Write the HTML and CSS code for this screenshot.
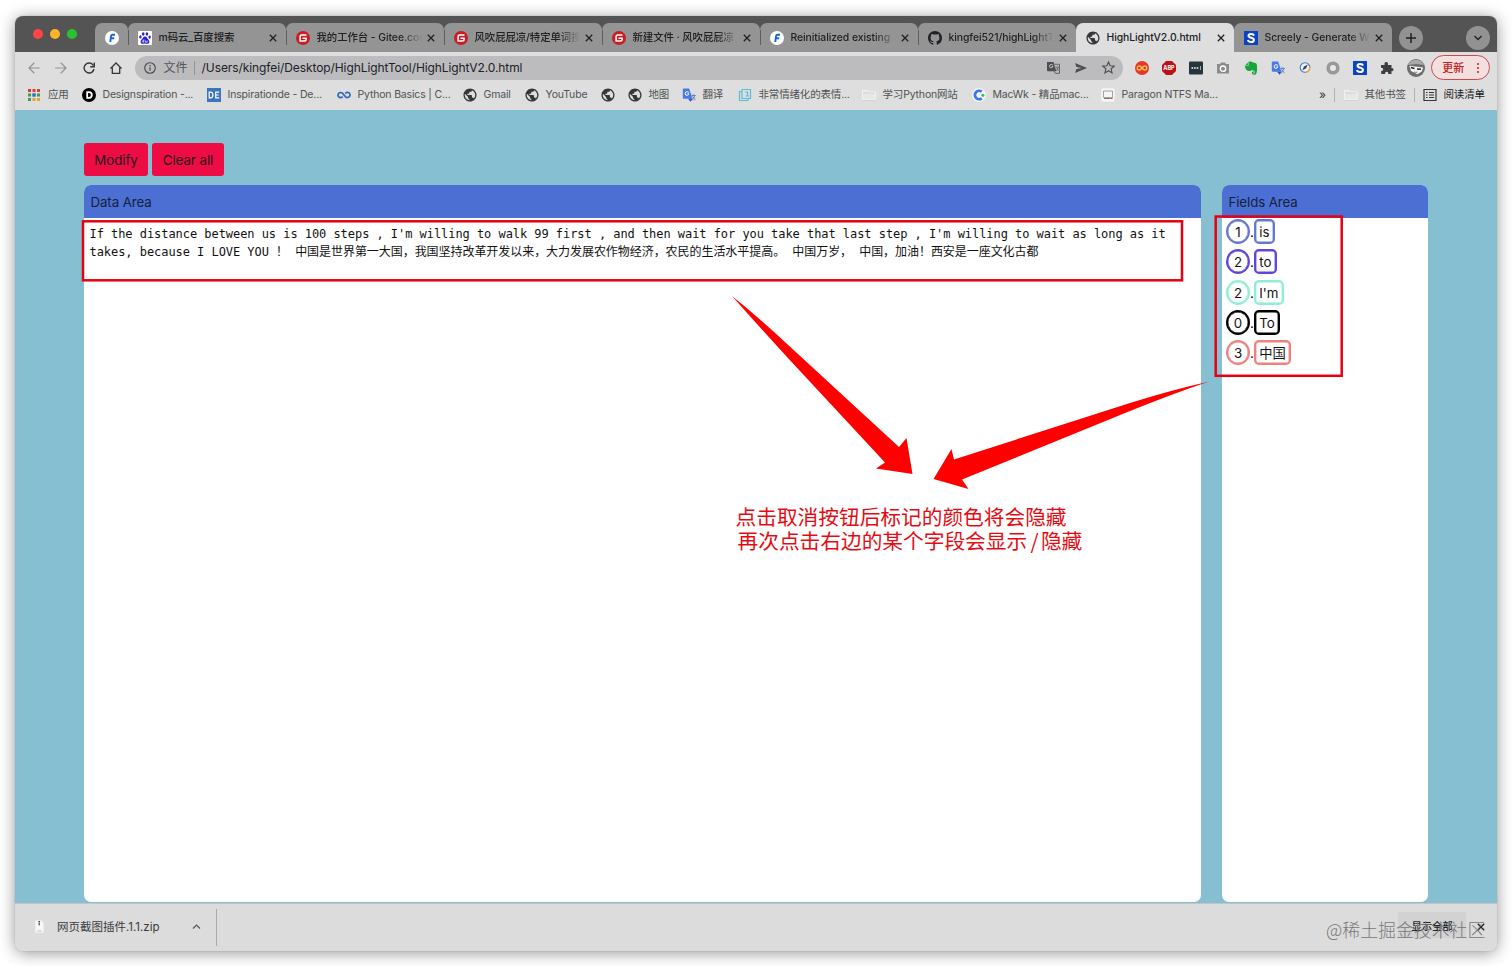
FILE: index.html
```html
<!DOCTYPE html>
<html lang="zh-CN">
<head>
<meta charset="utf-8">
<title>HighLightV2.0.html</title>
<link rel="stylesheet" href="styles.css">
</head>
<body>
<svg class="defs" width="0" height="0">
  <symbol id="f" viewBox="0 0 14 14"><circle cx="7" cy="7" r="7" fill="#fff"/><path d="M10 3.700H7.600Q6.200 3.700 6 5.300L5.300 11M5 7.300H9.200" fill="none" stroke="#1766dc" stroke-width="1.900"/></symbol>
  <symbol id="baidu" viewBox="0 0 14 14"><rect width="14" height="14" rx="1" fill="#fff"/><g fill="#2a22d8"><ellipse cx="5.2" cy="3" rx="1.3" ry="1.8"/><ellipse cx="8.9" cy="3" rx="1.3" ry="1.8"/><ellipse cx="2.4" cy="5.9" rx="1.2" ry="1.7"/><ellipse cx="11.6" cy="6.1" rx="1.2" ry="1.7"/><path d="M7 5.600c1.800 0 2 1.700 3.300 2.800 1.500 1.300 1.600 4.300-.9 4.300-1.200 0-1.500-.3-2.400-.3s-1.200.3-2.400.3c-2.500 0-2.400-3-.9-4.300C5 7.300 5.200 5.600 7 5.600z"/></g><path d="M5.800 8.500v2.700H4.700q-.7-.8 0-1.500h1M7.500 9.500v1.700h1.700V9.500" fill="none" stroke="#fff" stroke-width=".7"/></symbol>
  <symbol id="gitee" viewBox="0 0 14 14"><circle cx="7" cy="7" r="7" fill="#c71d23"/><path d="M10.500 4.100H5.900Q4.100 4.100 4.100 5.800v4.200h4.500q1.500 0 1.500-1.500V7.200H6.500" fill="none" stroke="#fff" stroke-width="1.500"/></symbol>
  <symbol id="github" viewBox="0 0 16 16"><path fill="#202124" d="M8 0C3.580 0 0 3.580 0 8c0 3.540 2.290 6.530 5.470 7.590.4.070.55-.17.55-.38 0-.19-.01-.82-.01-1.490-2.010.37-2.530-.49-2.690-.94-.09-.23-.48-.94-.82-1.130-.28-.15-.68-.52-.01-.53.63-.01 1.080.58 1.230.82.72 1.210 1.870.87 2.330.66.07-.52.28-.87.51-1.070-1.780-.2-3.640-.89-3.640-3.950 0-.87.31-1.590.82-2.150-.08-.2-.36-1.020.08-2.120 0 0 .67-.21 2.200.82.64-.18 1.320-.27 2-.27s1.360.09 2 .27c1.530-1.040 2.200-.82 2.200-.82.44 1.100.16 1.920.08 2.120.51.56.82 1.270.82 2.150 0 3.070-1.870 3.750-3.650 3.950.29.25.54.73.54 1.480 0 1.070-.01 1.930-.01 2.200 0 .21.15.46.55.38A8.010 8.010 0 0 0 16 8c0-4.420-3.580-8-8-8z"/></symbol>
  <symbol id="globe" viewBox="1.300 1.300 21.400 21.400"><path fill="#35363a" d="M12 2C6.480 2 2 6.480 2 12s4.480 10 10 10 10-4.480 10-10S17.520 2 12 2zm-1 17.930c-3.950-.49-7-3.850-7-7.930 0-.62.08-1.210.21-1.790L9 15v1c0 1.100.9 2 2 2v1.930zm6.900-2.540c-.26-.81-1-1.390-1.900-1.390h-1v-3c0-.55-.45-1-1-1H8v-2h2c.55 0 1-.45 1-1V7h2c1.100 0 2-.9 2-2v-.41c2.930 1.190 5 4.060 5 7.410 0 2.080-.8 3.970-2.100 5.390z"/></symbol>
  <symbol id="s" viewBox="0 0 14 14"><rect width="14" height="14" fill="#0b43c4"/><path d="M10 4.600Q9.500 2.900 7.100 2.900 4.500 2.900 4.500 4.800c0 2.700 5.400 1.300 5.400 4.100q0 2.100-2.700 2.100-2.700 0-3.300-2" fill="none" stroke="#fff" stroke-width="2"/></symbol>
  <symbol id="x" viewBox="0 0 8 8"><path d="M.8.800l6.400 6.400M7.200.800L.8 7.200" stroke="#202124" stroke-width="1.300"/></symbol>
  <symbol id="back" viewBox="0 0 12 12"><path d="M6.300.8L1 6l5.300 5.200M1 6h10.700" fill="none" stroke="#929296" stroke-width="1.200"/></symbol>
  <symbol id="trans" viewBox="0 0 14 14"><path d="M7.500 5.500H13v7.500H9z" fill="#c9cfdd"/><path d="M1.800.5h5.400l3.200 10.300H1.800q-1 0-1-1V1.500q0-1 1-1z" fill="#4679ea"/><path d="M6 10.800h4.400l-1.700 2.900z" fill="#2d4fae"/><path d="M6.800 4.300Q5 3 3.500 4.300q-1 1.700.4 2.900 2 .8 3-1.300H5.400" fill="none" stroke="#fff"/><path d="M9.600 7.500h4.200M11.700 6.500v1m-1.700 4q2.500-1.500 2.900-4m-2.400 1 2.900 3.300" fill="none" stroke="#5c74a8" stroke-width=".8"/></symbol>
  <symbol id="folder" viewBox="0 0 14 12"><path d="M.5 10.500v-9h4.700l1.200 1.400h7v7.600z" fill="#e7e7e7" stroke="#f2f2f2"/><path d="M.5 11.400h13M1 4h12" stroke="#c7c7c7" stroke-width=".6"/></symbol>
</svg>

<div class="window">
  <header class="tabstrip">
    <div class="lights"><i class="red"></i><i class="yellow"></i><i class="green"></i></div>
    <div class="tab pinned"><svg class="ico"><use href="#f"/></svg></div>
    <div class="tab"><svg class="ico"><use href="#baidu"/></svg><span class="title">m码云_百度搜索</span><svg class="close"><use href="#x"/></svg></div>
    <div class="tab"><svg class="ico"><use href="#gitee"/></svg><span class="title fade">我的工作台 - Gitee.com</span><svg class="close"><use href="#x"/></svg></div>
    <div class="tab"><svg class="ico"><use href="#gitee"/></svg><span class="title fade">风吹屁屁凉/特定单词搜</span><svg class="close"><use href="#x"/></svg></div>
    <div class="tab"><svg class="ico"><use href="#gitee"/></svg><span class="title fade">新建文件 · 风吹屁屁凉</span><svg class="close"><use href="#x"/></svg></div>
    <div class="tab"><svg class="ico"><use href="#f"/></svg><span class="title fade">Reinitialized existing</span><svg class="close"><use href="#x"/></svg></div>
    <div class="tab before-active"><svg class="ico"><use href="#github"/></svg><span class="title fade">kingfei521/highLightT</span><svg class="close"><use href="#x"/></svg></div>
    <div class="tab active"><svg class="ico"><use href="#globe"/></svg><span class="title">HighLightV2.0.html</span><svg class="close"><use href="#x"/></svg></div>
    <div class="tab last"><svg class="ico"><use href="#s"/></svg><span class="title fade">Screely - Generate W</span><svg class="close"><use href="#x"/></svg></div>
    <div class="round plus"><svg width="12" height="12"><path d="M6 1v10M1 6h10" stroke="#202124" stroke-width="1.500"/></svg></div>
    <div class="round search"><svg width="10" height="8"><path d="M1.500 2L5 5.500 8.500 2" fill="none" stroke="#202124" stroke-width="1.400"/></svg></div>
  </header>

  <nav class="toolbar">
    <svg class="nav"><use href="#back"/></svg>
    <svg class="nav forward"><use href="#back"/></svg>
    <svg class="nav" viewBox="0 0 12 12"><path d="M10.300 3.300A5 5 0 1 0 11 7M11.300.6v4.100H7.200" fill="none" stroke="#35363a" stroke-width="1.400"/></svg>
    <svg class="nav" viewBox="0 0 12 12"><path d="M.5 6.500L6 1l5.500 5.500M2.300 5.500v5.800h7.400V5.500" fill="none" stroke="#35363a" stroke-width="1.300"/></svg>
    <div class="omnibox">
      <svg width="12" height="12"><circle cx="6" cy="6" r="5.300" fill="none" stroke="#45464a" stroke-width="1.100"/><path d="M6 5.300v3.500M6 3v1.300" stroke="#45464a" stroke-width="1.200"/></svg>
      <span class="scheme">文件</span>
      <span class="url">/Users/kingfei/Desktop/HighLightTool/HighLightV2.0.html</span>
      <svg class="o1" width="13" height="13" viewBox="0 0 14 14"><path d="M0 1h7l3 10H1q-1 0-1-1z" fill="#4c4d50"/><path d="M8 3.500h5.500v9.800H9L7.500 11" fill="none" stroke="#5a5b5e"/><path d="M6.500 4.300Q4.600 3 3.100 4.300q-1 1.700.4 2.900 1.900.9 3-1.200H5" fill="none" stroke="#ccc"/><path d="M9.200 6.500h3.500m-2.800 4q2-1.300 2.300-4m-2 1.500 2.300 2.700" fill="none" stroke="#5a5b5e" stroke-width=".9"/></svg>
      <svg class="o2" width="12" height="10"><path d="M0 0l12 5L0 10l1.500-4L7 5 1.500 4z" fill="#4c4d50"/></svg>
      <svg class="o3" width="13" height="13" viewBox="0 0 14 14"><path d="M7 1l1.700 4.100 4.500.4-3.400 2.900 1 4.400L7 10.500l-3.800 2.300 1-4.400L.8 5.500l4.500-.4z" fill="none" stroke="#4c4d50" stroke-width="1.200"/></svg>
    </div>
    <div class="exts">
      <svg viewBox="0 0 14 14"><circle cx="7" cy="7" r="7" fill="#e6372d"/><path d="M7 7Q5.500 5 4.200 5a2 2 0 0 0 0 4Q5.500 9 7 7t2.800-2a2 2 0 0 1 0 4Q8.500 9 7 7z" fill="none" stroke="#ffc247" stroke-width="1.300"/></svg>
      <svg viewBox="0 0 14 14"><path d="M4.100 0h5.800L14 4.100v5.800L9.900 14H4.100L0 9.900V4.100z" fill="#bd1118"/><text x="7" y="9.200" class="abp">ABP</text></svg>
      <svg viewBox="0 0 14 14"><rect width="14" height="13" y=".5" rx="1" fill="#26343c"/><path d="M2.500 7h1.600m1 0h1.600m1 0h1.600" stroke="#fff" stroke-width="1.600"/><path d="M11.500 5v4" stroke="#9eacb1"/></svg>
      <svg viewBox="0 0 14 14"><path d="M1 3h3l1-1.500h4L10 3h3v9.500H1z" fill="#8b8b8b"/><circle cx="7" cy="7.700" r="2.700" fill="none" stroke="#fff" stroke-width="1.300"/></svg>
      <svg viewBox="0 0 14 14"><path d="M.8 4.800L4.700.8q2.800-.8 4.300.8l2.500.5q1.300.3 1.400 2 .6 5.400-.4 8.200-.6 1.600-2.500 1.500-2.300-.1-2.200-2 .1-1.700 2.200-1.600v1.300q-.9 0-.9.5t1 .5q.8-.2.600-1.800Q10.400 9.500 9 9.500L8 8.800Q7.500 10.500 4.500 9.900 1.500 9.500.8 4.800z" fill="#16a53a"/><path d="M1.200 4.600h3.200V1.300" stroke="#dcdcdc" stroke-width=".6" fill="none"/></svg>
      <svg><use href="#trans"/></svg>
      <svg viewBox="0 0 14 14"><circle cx="7" cy="6.500" r="4.800" fill="#eef0f4" stroke="#4b78c5" stroke-width="1.100"/><path d="M8 11.200a4.800 4.800 0 0 0 3.700-5.800" fill="none" stroke="#eda943" stroke-width="1.500"/><path d="M9.800 3.600L8 7.500 4.300 9.300 6 5.400z" fill="#26466c"/></svg>
      <svg viewBox="0 0 14 14"><circle cx="7" cy="7" r="4.800" fill="#e8e8e8" stroke="#999" stroke-width="3.600"/></svg>
      <svg viewBox="0 0 14 14"><use href="#s"/></svg>
      <svg viewBox="0 0 14 14"><path d="M1 4h3.600Q4 1 6.200 1T7.900 4h3.600v3.300q2-.5 2 1.300t-2 1.500V13H8.300q.2-2.300-1.600-2.300T5 13H1.200V9.900Q3.300 10 3.300 8.300T1 6.800z" fill="#3d3e41"/></svg>
    </div>
    <svg class="avatar" viewBox="0 0 18 18"><circle cx="9" cy="9" r="9" fill="#6d6d6d"/><path d="M1 6Q3 1 9 .800 15 1 17 6L9 5z" fill="#a9a9a9"/><path d="M2.500 6.800L16 8.500l-1 3.700-4.500 3L4 12z" fill="#f4f4f4"/><path d="M4 8.500l3.500.9M10 10l4 .3" stroke="#222" stroke-width="1.500"/><path d="M7 13q2 .8 3.500 0" fill="none" stroke="#666" stroke-width=".8"/></svg>
    <div class="update"><span>更新</span><i></i></div>
  </nav>

  <nav class="bookmarks">
    <div class="bm b-apps"><svg viewBox="0 0 12 12"><g stroke-width="3" stroke-dasharray="3 1.500"><path d="M0 1.500h12" stroke="#d8412f"/><path d="M0 6h12" stroke="#3d9a52"/><path d="M4.500 6h3" stroke="#2c6fd8"/><path d="M0 10.500h12" stroke="#e0a52c"/><path d="M0 10.500h3" stroke="#3d9a52"/></g></svg><span>应用</span></div>
    <div class="bm b-design"><svg viewBox="0 0 14 14"><circle cx="7" cy="7" r="7"/><path d="M5.200 4.200H7Q9.800 4.200 9.800 7T7 9.800H5.200z" fill="none" stroke="#fff" stroke-width="1.800"/></svg><span>Designspiration -...</span></div>
    <div class="bm b-insp"><svg viewBox="0 0 14 14"><rect width="14" height="14" fill="#3b75bd"/><path d="M2.200 4.200h1.400q2.300 0 2.300 2.800T3.600 9.800H2.200zM12.200 4.200H8.700v5.600h3.500M8.700 7h3" fill="none" stroke="#fff" stroke-width="1.200"/></svg><span>Inspirationde - De...</span></div>
    <div class="bm b-python"><svg viewBox="0 0 14 14"><path d="M5.700 8.600Q4.800 9.700 3.600 9.700a2.600 2.600 0 1 1 1.800-4.500l3.200 3.600a2.600 2.600 0 1 0-.3-3.400" fill="none" stroke="#3867b7" stroke-width="1.700"/></svg><span>Python Basics | C...</span></div>
    <div class="bm b-gmail"><svg><use href="#globe"/></svg><span>Gmail</span></div>
    <div class="bm b-yt"><svg><use href="#globe"/></svg><span>YouTube</span></div>
    <div class="bm b-blank"><svg><use href="#globe"/></svg></div>
    <div class="bm b-map"><svg><use href="#globe"/></svg><span>地图</span></div>
    <div class="bm b-trans"><svg><use href="#trans"/></svg><span>翻译</span></div>
    <div class="bm b-emo"><svg viewBox="0 0 14 14"><path d="M4 1.500h8.500v9H4zM4 3.500H1.500v9h8.500v-2M7 4h2.500v4M7.500 8h3.500" fill="none" stroke="#56bddd" stroke-width="1.200"/></svg><span>非常情绪化的表情...</span></div>
    <div class="bm b-learn"><svg><use href="#folder"/></svg><span>学习Python网站</span></div>
    <div class="bm b-mac"><svg viewBox="0 0 14 14"><circle cx="7" cy="7" r="7" fill="#f2f4f7"/><path d="M9.700 3.700A4.200 4.200 0 1 0 9.700 10.300" fill="none" stroke="#3979e8" stroke-width="2.800"/><circle cx="10.900" cy="7.300" r="1.500" fill="#33bd55"/></svg><span>MacWk - 精品mac...</span></div>
    <div class="bm b-para"><svg viewBox="0 0 14 14"><rect x=".3" y=".3" width="13.400" height="13.400" rx="2" fill="#f5f5f5"/><path d="M2.500 3h9v6.500h-9z" fill="none" stroke="#8e8e8e" stroke-width=".8"/><path d="M3 10.500h6" stroke="#777" stroke-width="1.200"/><path d="M9.500 10.500h2" stroke="#c33" stroke-width="1.200"/></svg><span>Paragon NTFS Ma...</span></div>
    <span class="more">»</span>
    <div class="bm b-other"><svg><use href="#folder"/></svg><span>其他书签</span></div>
    <div class="bm b-read"><svg viewBox="0 0 14 14"><path d="M1 1.500h12v11H1zM3 4.500h1.500m1.500 0h5M3 7h1.500M6 7h5M3 9.500h1.500m1.500 0h5" fill="none" stroke="#35363a" stroke-width="1.200"/></svg><span>阅读清单</span></div>
  </nav>

  <main class="page">
    <div class="buttons"><button class="btn modify">Modify</button><button class="btn clear">Clear all</button></div>
    <div class="panels">
      <section class="panel data">
        <h2>Data Area</h2>
        <p><span class="line">If the distance between us is 100 steps , I'm willing to walk 99 first , and then wait for you take that last step , I'm willing to wait as long as it</span><span class="line">takes, because I LOVE YOU ！ 中国是世界第一大国，我国坚持改革开发以来，大力发展农作物经济，农民的生活水平提高。 中国万岁， 中国，加油！西安是一座文化古都</span></p>
      </section>
      <section class="panel fields">
        <h2>Fields Area</h2>
        <ul>
          <li class="c1"><b>1</b><i>.</i><span>is</span></li>
          <li class="c2"><b>2</b><i>.</i><span>to</span></li>
          <li class="c3"><b>2</b><i>.</i><span>I'm</span></li>
          <li class="c4"><b>0</b><i>.</i><span>To</span></li>
          <li class="c5"><b>3</b><i>.</i><span>中国</span></li>
        </ul>
      </section>
    </div>
  </main>

  <footer class="downloads">
    <svg class="zip" viewBox="0 0 10 14"><path d="M.5.500h6.500l2.500 2.500v10.500h-9z" fill="#f7f7f7" stroke="#eee"/><path d="M4.700 1v5" stroke="#333" stroke-width="1.600" stroke-dasharray="1.200 .5"/><path d="M2.500 12h5" stroke="#bbb"/></svg>
    <span class="file">网页截图插件.1.1.zip</span>
    <svg class="chev" width="9" height="7"><path d="M1 5.500L4.500 2 8 5.500" fill="none" stroke="#55565a" stroke-width="1.200"/></svg>
    <div class="showall">显示全部</div>
    <svg class="dclose"><use href="#x"/></svg>
  </footer>
</div>

<svg class="marks" width="1512" height="966">
  <g fill="none" stroke="#e60012" stroke-width="2.500"><rect x="83" y="221.300" width="1099" height="59"/><rect x="1215.700" y="216.500" width="126" height="159.300"/></g>
  <path d="M732 296Q757 316 786 343L899 447 906.500 438 912.500 474 876 468.500 885 462.500 787 357Q754 321 732 296z" fill="#f00"/>
  <path d="M1209.500 381.500Q1175 389 1130 403L954 459.500 951.500 449 933.500 479 968.500 489 962 479.500 1130 411Q1180 391 1209.500 381.500z" fill="#f00"/>
</svg>
<div class="note">点击取消按钮后标记的颜色将会隐藏<br><span class="second">再次点击右边的某个字段会显示<span class="slash"> / </span>隐藏</span></div>
<div class="watermark">@稀土掘金技术社区</div>
</body>
</html>
```
FILE: styles.css
```css
* { box-sizing: border-box; }
body { margin: 0; width: 1512px; height: 966px; overflow: hidden; background: #fff; position: relative; font-family: Inter, "Noto Sans CJK SC", sans-serif; color: #202124; }
svg { display: block; flex: none; }
.defs { position: absolute; }
.window { width: 1482px; height: 935px; margin: 16px 0 0 15px; border-radius: 8px; overflow: hidden; display: flex; flex-direction: column; background: #dedede; }
body::before { content: ""; position: absolute; z-index: -1; left: 15px; top: 16px; width: 1482px; height: 935px; border-radius: 8px; box-shadow: 0 2px 16px rgba(0,0,0,.42), 0 0 1px rgba(0,0,0,.4); }

/* tab strip */
.tabstrip { height: 36px; flex: none; background: #545454; display: flex; align-items: flex-end; }
.lights { display: flex; gap: 7px; width: 80px; padding-left: 18px; height: 36px; padding-top: 13px; }
.lights i { width: 10px; height: 10px; border-radius: 50%; }
.red { background: #ff4543; }
.yellow { background: #fdb42a; }
.green { background: #2ac231; }
.tab { position: relative; flex: none; width: 158px; height: 29px; padding-left: 10px; border-radius: 7px 7px 0 0; background: #949494; display: flex; align-items: center; }
.tab::before { content: ""; position: absolute; left: 0; top: 7px; height: 15px; width: 1px; background: #5f5f5f; }
.tab.pinned { width: 33px; }
.tab.pinned::before, .tab.active::before, .tab.last::before { display: none; }
.tab.active { background: #dedede; }
.ico { width: 14px; height: 14px; }
.title { width: 107px; margin-left: 6.500px; margin-right: .5px; font-size: 10.400px; line-height: 16px; letter-spacing: -.07px; white-space: nowrap; overflow: hidden; font-weight: 450; }
.fade { width: 105px; margin-right: 2.500px; -webkit-mask-image: linear-gradient(90deg, #000 80%, transparent); mask-image: linear-gradient(90deg, #000 80%, transparent); }
.close { width: 8px; height: 8px; margin-left: 3px; }
.round { width: 24px; height: 24px; border-radius: 50%; background: #929292; display: flex; align-items: center; justify-content: center; margin-bottom: 2px; }
.plus { margin-left: 7px; }
.search { margin-left: auto; margin-right: 7px; }

/* toolbar */
.toolbar { height: 31px; flex: none; display: flex; align-items: center; padding-left: 13px; }
.nav { width: 12px; height: 12px; margin-right: 15.400px; }
.forward { transform: scaleX(-1); }
.omnibox { width: 988px; height: 24px; margin-left: -3px; border-radius: 12px; background: #bcbcbf; display: flex; align-items: center; padding-left: 9px; }
.scheme { margin-left: 8px; padding-right: 6px; border-right: 1px solid #929295; font-size: 12px; line-height: 14px; width: 31px; color: #55565a; white-space: nowrap; }
.url { width: 852px; padding-left: 7px; font-size: 12px; letter-spacing: -.09px; white-space: nowrap; }
.o2 { margin-left: 15px; }
.o3 { margin-left: 15px; }
.exts { display: flex; gap: 13.300px; margin-left: 12px; }
.exts svg { width: 14px; height: 14px; }
.abp { font: bold 5.500px Inter, sans-serif; fill: #fff; text-anchor: middle; }
.avatar { width: 18px; height: 18px; margin-left: 13px; }
.update { margin-left: 6px; width: 59px; height: 25px; border: 1.500px solid #cb4a4d; border-radius: 13px; background: #f4dfdf; color: #c5221f; font-size: 11px; font-weight: 500; display: flex; align-items: center; padding: 0 0 2px 10px; }
.update i { width: 2px; height: 2px; border-radius: 1px; background: #c5221f; box-shadow: 0 -4px #c5221f, 0 4px #c5221f; margin: 2px 0 0 13px; }

/* bookmarks */
.bookmarks { height: 27px; flex: none; display: flex; align-items: center; padding: 0 0 3px 12px; font-size: 10.500px; letter-spacing: -.17px; color: #505155; }
.bm { display: flex; align-items: center; flex: none; white-space: nowrap; gap: 6.500px; }
.bm span { line-height: 14px; font-family: Inter, "Noto Sans CJK SC", sans-serif; }
.bm svg { width: 14px; height: 14px; }
.b-apps { width: 55px; gap: 8px; }
.b-apps svg { width: 12px; height: 12px; margin-left: 1px; }
.b-design { width: 125px; }
.b-insp { width: 130px; }
.b-python { width: 126px; }
.b-gmail { width: 62px; }
.b-yt { width: 76px; }
.b-blank { width: 27px; }
.b-map { width: 54px; }
.b-trans { width: 56px; }
.b-emo { width: 124px; }
.b-learn { width: 110px; }
.b-mac { width: 129px; }
.b-para { width: 218px; }
.more { width: 15px; color: #35363a; font-size: 12px; line-height: 14px; }
.b-other { border-left: 1px solid #b1b1b1; padding-left: 9px; width: 80px; }
.b-read { border-left: 1px solid #b1b1b1; padding-left: 8px; color: #202124; }

/* page */
.page { height: 793px; flex: none; background: #86bfd2; padding: 33px 68px 0 69px; }
.buttons { display: flex; gap: 4px; height: 33px; }
.btn { border: 0; border-radius: 3px; background: #ed0c43; font: 13.300px Inter, sans-serif; color: #24181d; padding: 0; letter-spacing: -.05px; }
.modify { width: 64px; }
.clear { width: 72px; }
.panels { display: flex; justify-content: space-between; margin-top: 9px; height: 717px; width: 1344px; }
.panel { background: #fff; border-radius: 7px; overflow: hidden; }
.data { width: 1117px; }
.fields { width: 206px; }
.panel h2 { margin: 0; height: 33px; line-height: 34px; padding-left: 6.500px; background: #4b6fd3; font-size: 13.300px; letter-spacing: -.1px; font-weight: 400; color: #15213c; }
.data p { margin: 0; padding: 7px 0 0 5.500px; font-family: "DejaVu Sans Mono", "Noto Sans CJK SC", monospace; font-size: 12px; letter-spacing: -.05px; line-height: 18px; color: #111; }
.line { display: block; white-space: pre; height: 18px; }
.fields ul { list-style: none; margin: 0; padding: 1px 0 0 4px; }
.fields li { display: flex; height: 30.300px; font-size: 13.300px; color: #111; }
.fields b { width: 24px; height: 25px; border: 2px solid; border-color: var(--c); border-radius: 50%; font-weight: 400; text-align: center; line-height: 22px; }
.fields i { font-style: normal; width: 4px; line-height: 26px; text-align: center; }
.fields li span { height: 25px; border: 2px solid; border-color: var(--c); border-radius: 5px; padding: 0 3.300px; line-height: 22px; }
.c1 { --c: #6678cb; }
.c2 { --c: #5f45db; }
.c3 { --c: #8cefd7; }
.c4 { --c: #000; }
.c5 { --c: #ee817e; }
.fields li b, .fields li span { box-shadow: inset 0 0 0 .4px var(--c); }

/* downloads */
.downloads { height: 48px; flex: none; background: #dcdcdc; border-top: 1px solid #c2c5c6; display: flex; align-items: center; padding-bottom: 2px; }
.zip { width: 9px; height: 13px; margin-left: 20px; }
.file { width: 134px; margin-left: 13px; padding-bottom: 1px; font-size: 11.500px; white-space: nowrap; color: #3a3b3e; }
.chev { margin: 0 15px 0 1px; }
.chev + .showall { margin-left: auto; }
.chev::after { content: ""; }
.showall { width: 68px; height: 26px; margin-bottom: 3px; background: #d2d2d2; font-size: 10.300px; font-weight: 500; line-height: 28px; text-align: center; }
.dclose { width: 8px; height: 8px; margin: 0 12px 0 11px; }
.downloads { background-image: linear-gradient(#aaa, #aaa); background-size: 1px 37px; background-position: 201px 5px; background-repeat: no-repeat; }

/* annotations */
.marks { position: absolute; left: 0; top: 0; }
.note { position: absolute; left: 735.500px; top: 504px; font: 20.700px/24px "Noto Sans CJK SC", sans-serif; color: #e60b12; white-space: nowrap; }
.second { padding-left: 2px; }
.slash { letter-spacing: -1.200px; }
.watermark { position: absolute; left: 1326px; top: 916px; font: 300 17.900px/26px "Noto Sans CJK SC", sans-serif; color: #77787a; white-space: nowrap; }
```
